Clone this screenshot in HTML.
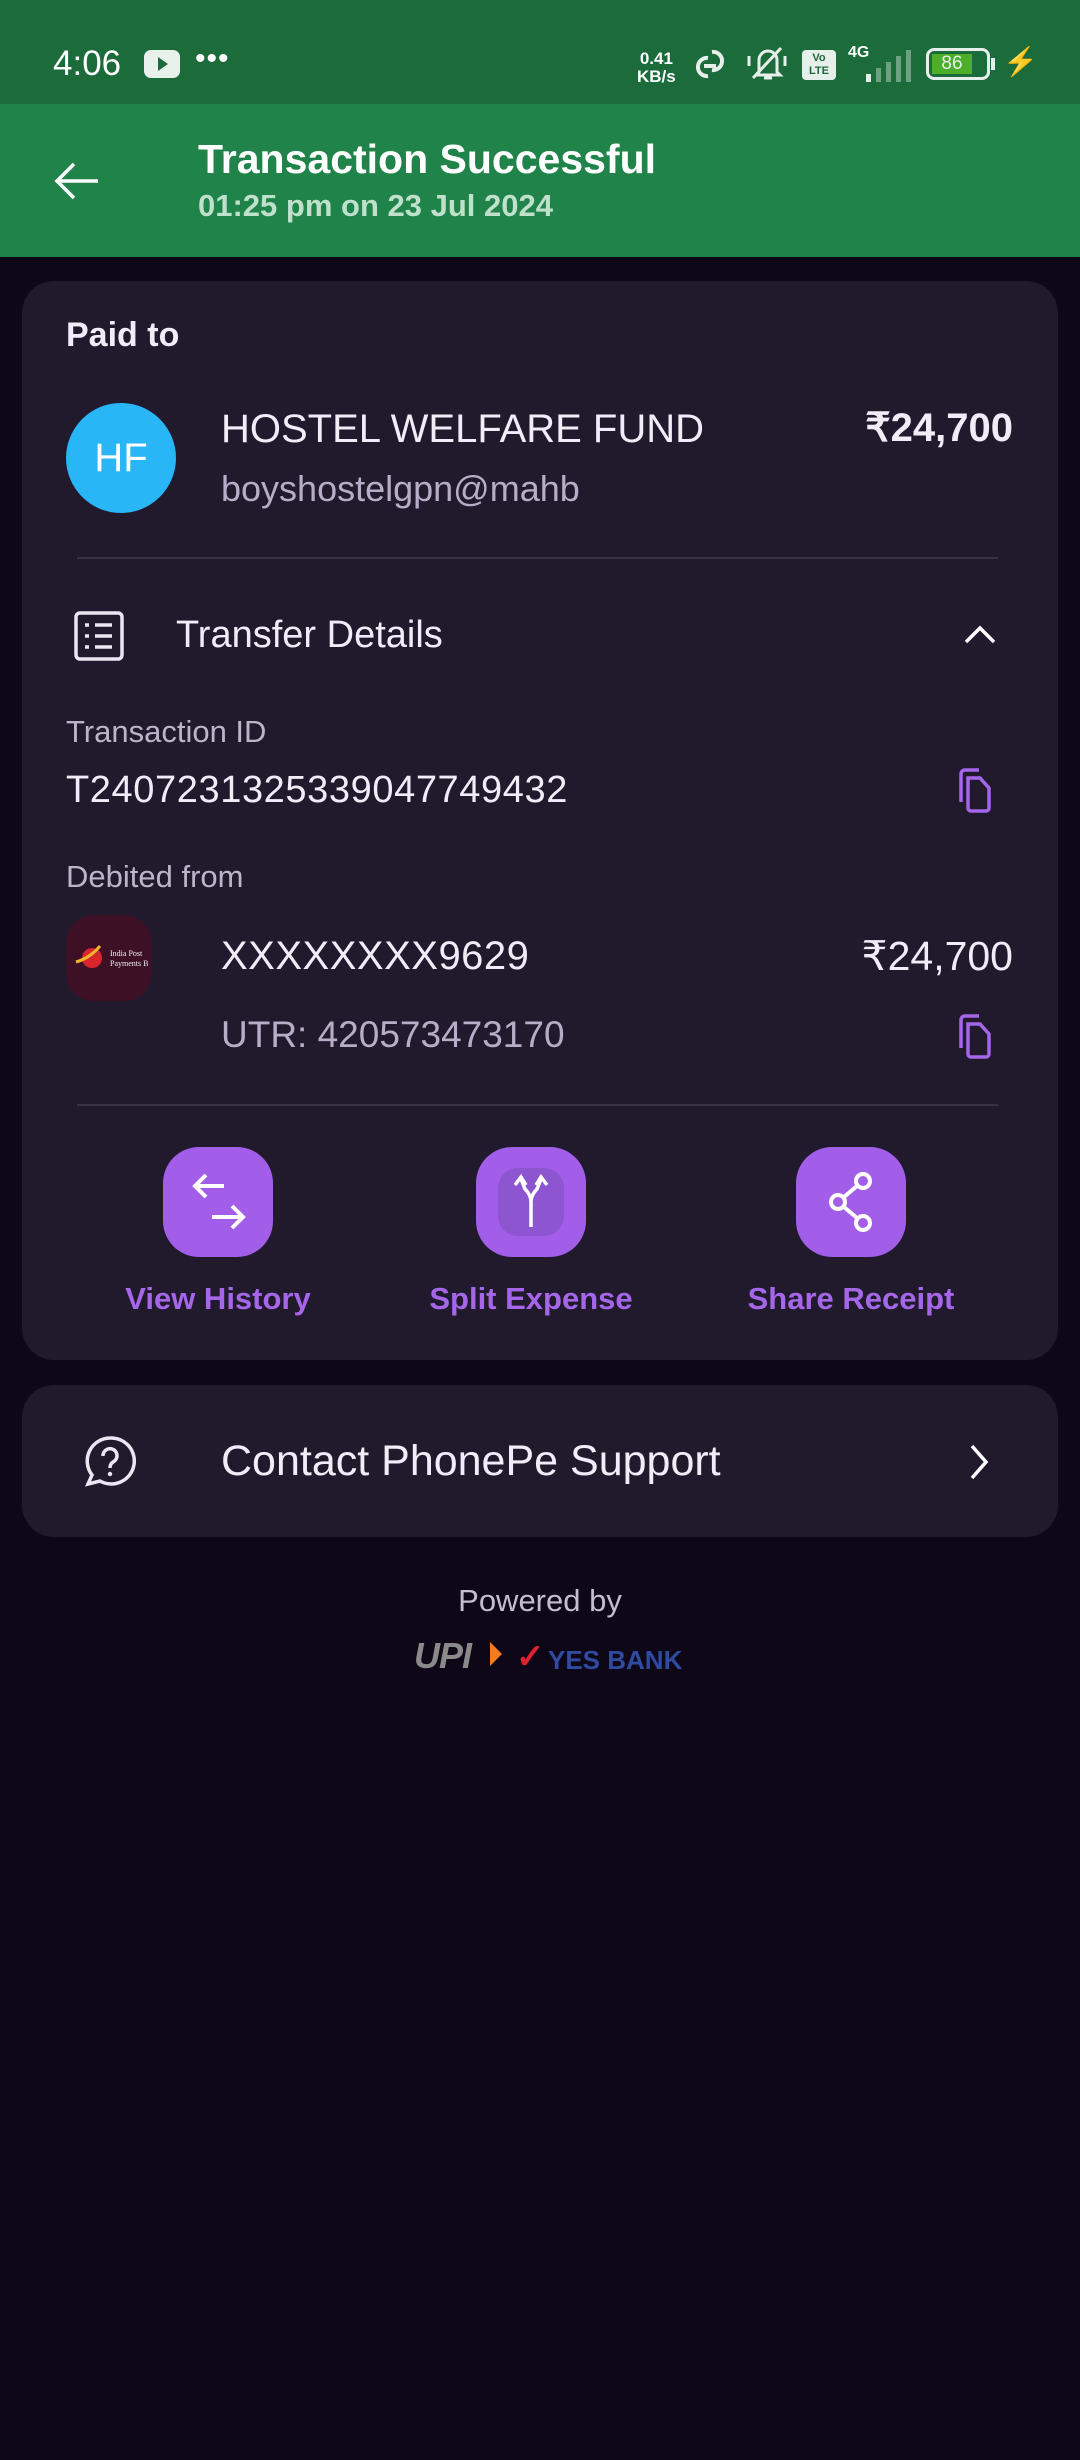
<!DOCTYPE html>
<html><head><meta charset="utf-8">
<style>
*{margin:0;padding:0;box-sizing:border-box}
body{width:1080px;height:2460px;background:#0d0717;font-family:"Liberation Sans",sans-serif;position:relative;overflow:hidden;color:#f2ecf8}
.abs{position:absolute}
.sb{left:0;top:0;width:1080px;height:104px;background:#1b6b3b}
.hd{left:0;top:104px;width:1080px;height:153px;background:#1f834a}
.card{background:#211a2d;border-radius:32px}
.t{white-space:nowrap;line-height:1}
.btn{width:110px;height:110px;border-radius:36px;background:#a25ee9}
.lbl{color:#a566ea;font-weight:bold;font-size:31px;text-align:center;width:300px}
</style></head><body>
<div class="abs sb"></div>
<div class="abs t" style="left:53px;top:46px;font-size:35px;color:#fff">4:06</div>
<div class="abs" style="left:144px;top:50px;width:36px;height:28px;background:#e9f1ec;border-radius:7px"></div>
<div class="abs" style="left:158px;top:57px;width:0;height:0;border-left:10px solid #1b6b3b;border-top:7px solid transparent;border-bottom:7px solid transparent"></div>
<div class="abs t" style="left:195px;top:44px;font-size:30px;color:#fff;letter-spacing:1px">•••</div>
<div class="abs t" style="left:637px;top:50px;font-size:17px;font-weight:bold;color:#fff;text-align:center;line-height:1.05">0.41<br>KB/s</div>
<svg class="abs" style="left:690px;top:44px" width="40" height="40" viewBox="0 0 40 40"><path d="M22 8a9 9 0 0 1 10 10 9 9 0 0 1-10 8M18 32a9 9 0 0 1-10-10 9 9 0 0 1 10-8M14 22h12" stroke="#e6efe9" stroke-width="4" fill="none"/></svg>
<svg class="abs" style="left:745px;top:42px" width="46" height="42" viewBox="0 0 46 42"><path d="M14 30V18a9 9 0 0 1 18 0v12l3 3H11zM19 36h8M8 36L36 6M4 14v10M40 14v10" stroke="#e6efe9" stroke-width="3" fill="none"/></svg>
<div class="abs" style="left:802px;top:50px;width:34px;height:30px;background:#e6efe9;border-radius:4px;font-size:11px;font-weight:bold;color:#1b6b3b;text-align:center;line-height:13px;padding-top:2px">Vo<br>LTE</div>
<div class="abs t" style="left:848px;top:45px;font-size:16px;font-weight:bold;color:#fff">4G</div>
<svg class="abs" style="left:846px;top:48px" width="70" height="36" viewBox="0 0 70 36"><rect x="20" y="26" width="5" height="8" fill="#e6efe9"/><rect x="30" y="20" width="5" height="14" fill="#6ea082"/><rect x="40" y="14" width="5" height="20" fill="#6ea082"/><rect x="50" y="8" width="5" height="26" fill="#6ea082"/><rect x="60" y="2" width="5" height="32" fill="#6ea082"/></svg>
<div class="abs" style="left:926px;top:48px;width:64px;height:32px;border:3px solid #e6efe9;border-radius:8px;padding:3px"><div style="width:40px;height:20px;background:#4cae2a;color:#e6efe9;font-size:19px;text-align:center;line-height:20px">86</div></div>
<div class="abs" style="left:991px;top:58px;width:4px;height:12px;background:#e6efe9"></div>
<div class="abs t" style="left:1003px;top:48px;font-size:28px;color:#e6efe9">⚡</div>

<div class="abs hd"></div>
<svg class="abs" style="left:52px;top:156px" width="50" height="50" viewBox="0 0 50 50"><path d="M46 25H6M22 8L5 25l17 17" stroke="#fff" stroke-width="3.5" fill="none"/></svg>
<div class="abs t" style="left:198px;top:139px;font-size:41px;font-weight:bold;color:#fff">Transaction Successful</div>
<div class="abs t" style="left:198px;top:190px;font-size:31px;font-weight:bold;color:#bfe0cb">01:25 pm on 23 Jul 2024</div>

<div class="abs card" style="left:22px;top:281px;width:1036px;height:1079px"></div>
<div class="abs t" style="left:66px;top:318px;font-size:34px;font-weight:bold">Paid to</div>
<div class="abs" style="left:66px;top:403px;width:110px;height:110px;border-radius:50%;background:#29b6f6;color:#fff;font-size:40px;text-align:center;line-height:110px">HF</div>
<div class="abs t" style="left:221px;top:409px;font-size:40px">HOSTEL WELFARE FUND</div>
<div class="abs t" style="right:67px;top:408px;font-size:40px;font-weight:bold">₹24,700</div>
<div class="abs t" style="left:221px;top:471px;font-size:36px;color:#b8adc6">boyshostelgpn@mahb</div>
<div class="abs" style="left:77px;top:557px;width:921px;height:2px;background:#3a3247"></div>

<svg class="abs" style="left:73px;top:610px" width="52" height="52" viewBox="0 0 52 52"><rect x="3" y="3" width="46" height="46" rx="4" stroke="#ece6f3" stroke-width="3.5" fill="none"/><path d="M12 15h4M22 15h17M12 26h4M22 26h17M12 37h4M22 37h17" stroke="#ece6f3" stroke-width="3.5"/></svg>
<div class="abs t" style="left:176px;top:616px;font-size:38px">Transfer Details</div>
<svg class="abs" style="left:962px;top:620px" width="36" height="28" viewBox="0 0 36 28"><path d="M4 22L18 8l14 14" stroke="#fff" stroke-width="3.5" fill="none"/></svg>

<div class="abs t" style="left:66px;top:716px;font-size:31px;color:#bdb4c9">Transaction ID</div>
<div class="abs t" style="left:66px;top:771px;font-size:38px;letter-spacing:0.6px">T2407231325339047749432</div>
<svg class="abs" style="left:955px;top:766px" width="40" height="50" viewBox="0 0 40 50"><path d="M6 36V8a4 4 0 0 1 4-4h14M13 12h12l9 10v20a3 3 0 0 1-3 3H16a3 3 0 0 1-3-3z" stroke="#a566ea" stroke-width="3.5" fill="none"/></svg>
<div class="abs t" style="left:66px;top:861px;font-size:31px;color:#bdb4c9">Debited from</div>
<div class="abs" style="left:66px;top:915px;width:86px;height:86px;border-radius:28px;background:#3d1026"></div>
<svg class="abs" style="left:72px;top:940px" width="76" height="34" viewBox="0 0 76 34"><circle cx="20" cy="18" r="10" fill="#d8262c"/><path d="M4 22Q18 18 28 6" stroke="#f2b52a" stroke-width="3" fill="none"/><text x="38" y="16" font-size="8" fill="#eee" font-family="Liberation Serif">India Post</text><text x="38" y="26" font-size="8" fill="#eee" font-family="Liberation Serif">Payments Bank</text></svg>
<div class="abs t" style="left:221px;top:936px;font-size:40px;letter-spacing:0.5px">XXXXXXXX9629</div>
<div class="abs t" style="right:67px;top:936px;font-size:41px">₹24,700</div>
<div class="abs t" style="left:221px;top:1016px;font-size:37px;color:#b8adc6">UTR: 420573473170</div>
<svg class="abs" style="left:955px;top:1012px" width="40" height="50" viewBox="0 0 40 50"><path d="M6 36V8a4 4 0 0 1 4-4h14M13 12h12l9 10v20a3 3 0 0 1-3 3H16a3 3 0 0 1-3-3z" stroke="#a566ea" stroke-width="3.5" fill="none"/></svg>
<div class="abs" style="left:77px;top:1104px;width:921px;height:2px;background:#3a3247"></div>

<div class="abs btn" style="left:163px;top:1147px"></div>
<svg class="abs" style="left:163px;top:1147px" width="110" height="110" viewBox="0 0 110 110"><path d="M33 39h28M43 28L32 39l11 11M49 70h30M69 59l11 11-11 11" stroke="#fff" stroke-width="4" fill="none"/></svg>
<div class="abs btn" style="left:476px;top:1147px"></div>
<div class="abs" style="left:498px;top:1168px;width:66px;height:68px;border-radius:20px;background:#8d55cf"></div>
<svg class="abs" style="left:476px;top:1147px" width="110" height="110" viewBox="0 0 110 110"><path d="M55 80V55Q55 48 49 42L45 32M55 55Q55 48 61 42L65 32M39 38l6-8 5 8M60 38l5-8 6 8" stroke="#fff" stroke-width="3.5" fill="none"/></svg>
<div class="abs btn" style="left:796px;top:1147px"></div>
<svg class="abs" style="left:796px;top:1147px" width="110" height="110" viewBox="0 0 110 110"><circle cx="67" cy="34" r="7" stroke="#fff" stroke-width="4" fill="none"/><circle cx="42" cy="55" r="7" stroke="#fff" stroke-width="4" fill="none"/><circle cx="67" cy="76" r="7" stroke="#fff" stroke-width="4" fill="none"/><path d="M48 50l13-11M48 60l13 11" stroke="#fff" stroke-width="4"/></svg>
<div class="abs t lbl" style="left:68px;top:1283px">View History</div>
<div class="abs t lbl" style="left:381px;top:1283px">Split Expense</div>
<div class="abs t lbl" style="left:701px;top:1283px">Share Receipt</div>

<div class="abs card" style="left:22px;top:1385px;width:1036px;height:152px"></div>
<svg class="abs" style="left:82px;top:1434px" width="56" height="56" viewBox="0 0 56 56"><path d="M28 4a23 23 0 1 1-10 43L6 50l4-9A23 23 0 0 1 28 4z" stroke="#ece6f3" stroke-width="3.5" fill="none"/><path d="M21 22a7 7 0 1 1 10 6q-3 2-3 6" stroke="#ece6f3" stroke-width="3.5" fill="none"/><circle cx="28" cy="40" r="2.2" fill="#ece6f3"/></svg>
<div class="abs t" style="left:221px;top:1440px;font-size:43px">Contact PhonePe Support</div>
<svg class="abs" style="left:964px;top:1442px" width="30" height="40" viewBox="0 0 30 40"><path d="M8 4l14 16L8 36" stroke="#fff" stroke-width="3.5" fill="none"/></svg>

<div class="abs t" style="left:0;width:1080px;text-align:center;top:1585px;font-size:31px;color:#c4bccf">Powered by</div>
<div class="abs t" style="left:414px;top:1638px;font-size:36px;font-weight:bold;font-style:italic;color:#8a8a8a;letter-spacing:-1px">UPI</div>
<div class="abs" style="left:490px;top:1642px;width:0;height:0;border-left:12px solid #f47c20;border-top:12px solid transparent;border-bottom:12px solid transparent"></div>
<div class="abs t" style="left:516px;top:1640px;font-size:34px;color:#e0202e;font-weight:bold">✓</div>
<div class="abs t" style="left:548px;top:1647px;font-size:26px;font-weight:bold;color:#2f4aa0">YES BANK</div>
</body></html>
